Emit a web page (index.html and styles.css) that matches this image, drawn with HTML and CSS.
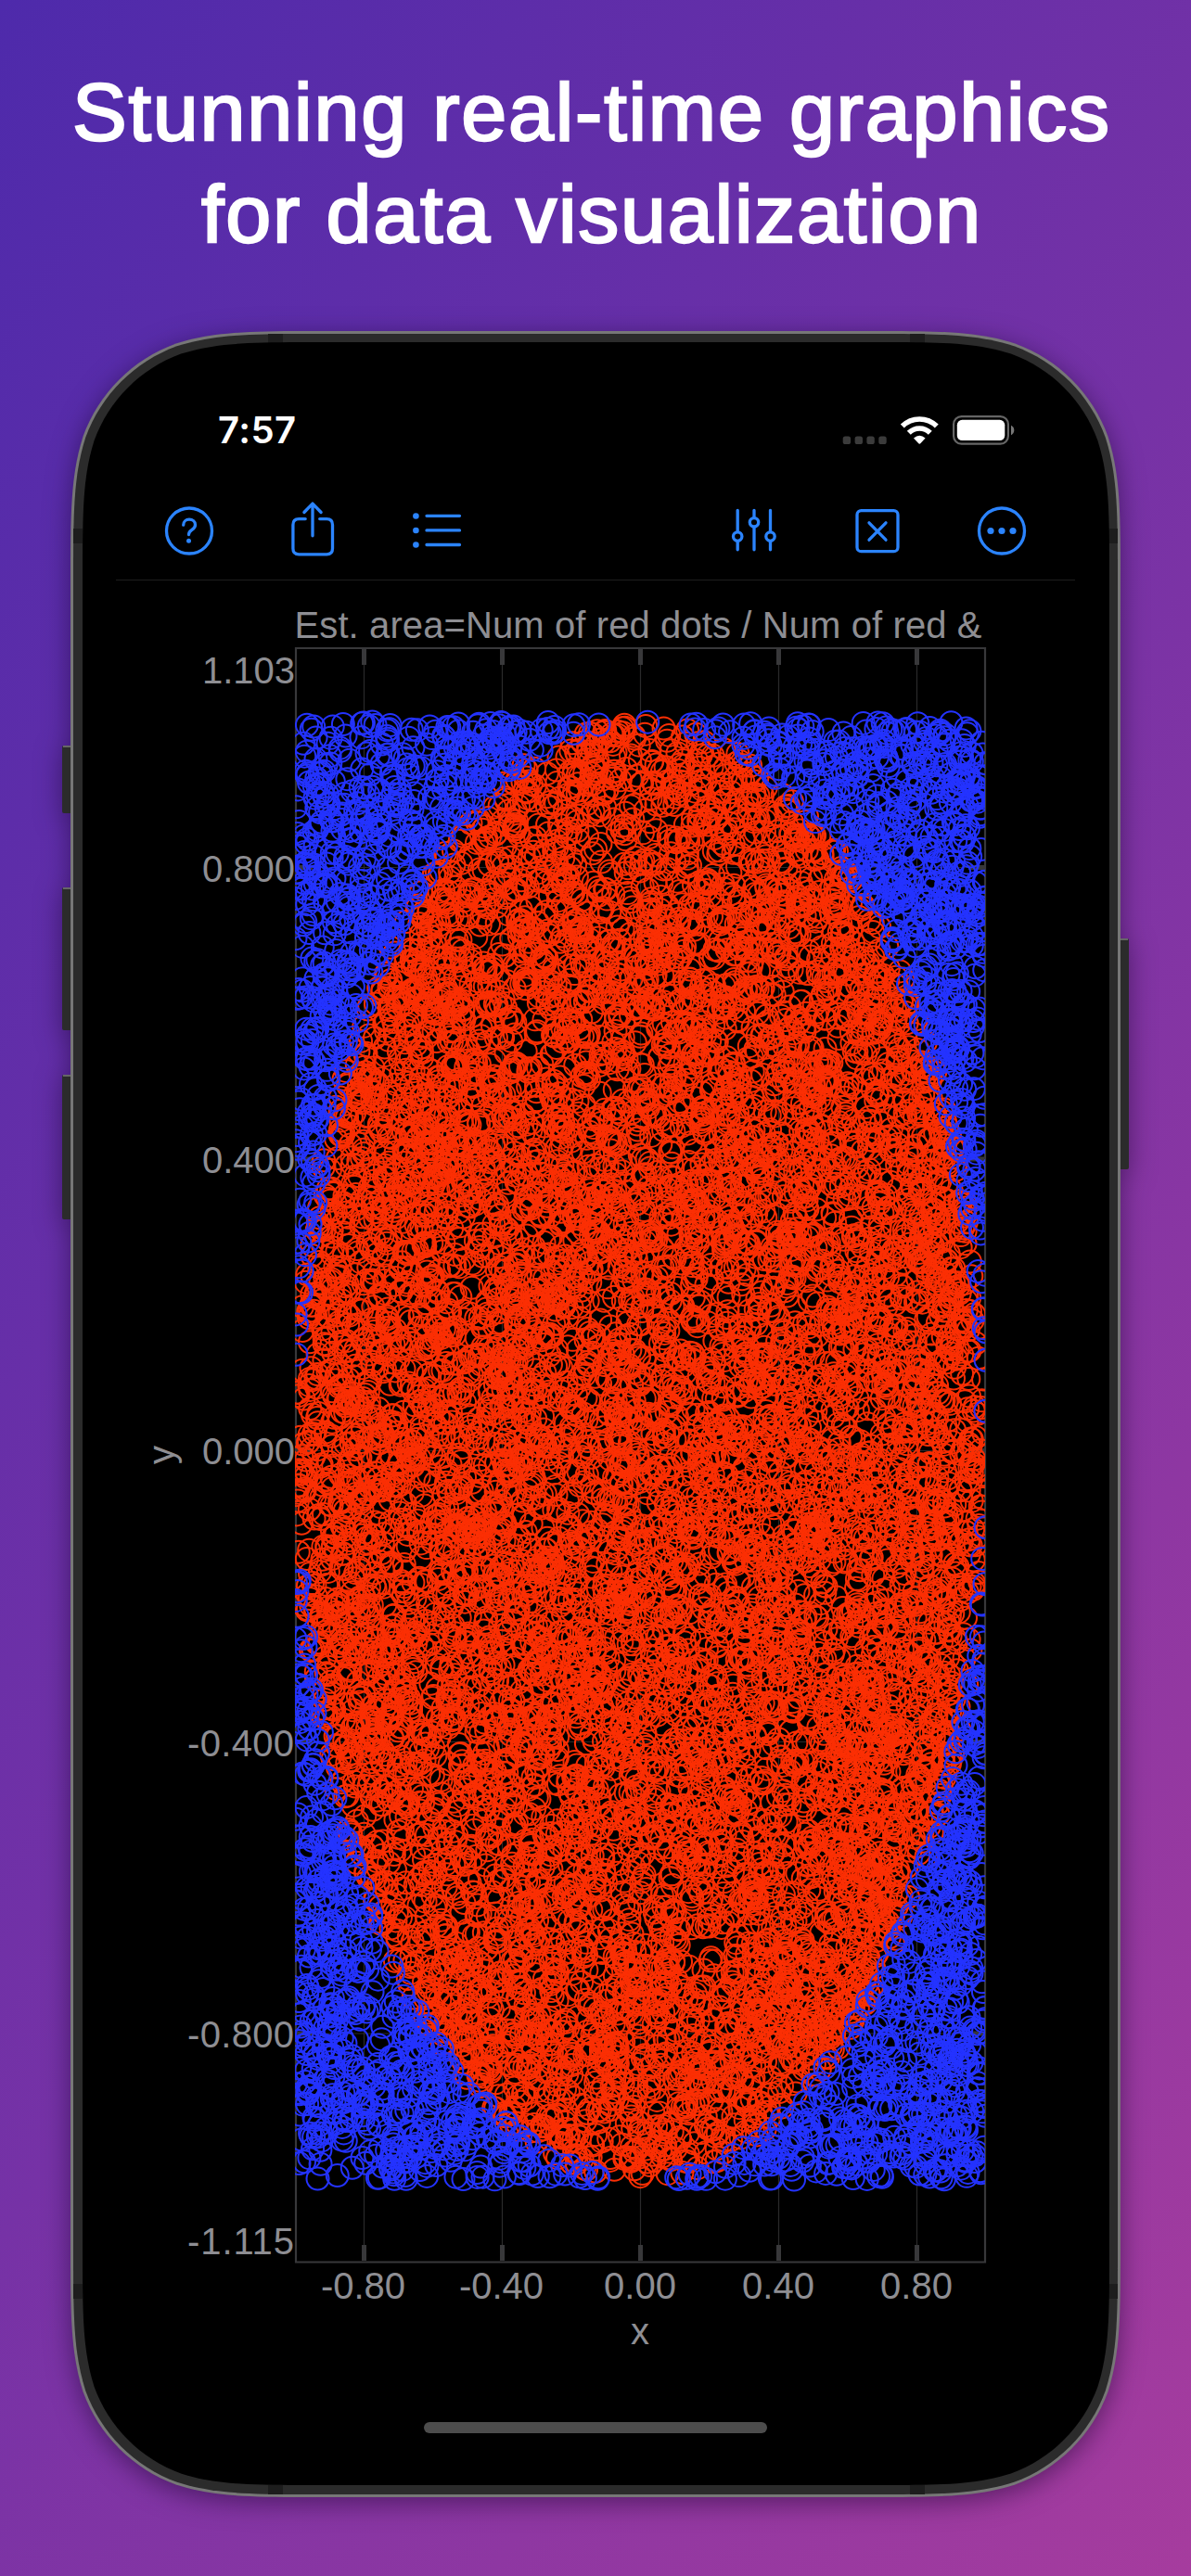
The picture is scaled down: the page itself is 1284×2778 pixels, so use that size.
FILE: index.html
```html
<!DOCTYPE html>
<html lang="en">
<head>
<meta charset="utf-8">
<title>Stunning real-time graphics</title>
<link rel="stylesheet" href="styles.css">
</head>
<body>
<main class="poster">
  <h1 class="headline">Stunning real-time graphics<br>for data visualization</h1>
  <section class="phone">
    <svg class="frame" viewBox="0 0 1150 2336" aria-hidden="true">
      <g class="keys">
        <rect x="0" y="447" width="14" height="73" rx="2"/><rect x="0" y="600" width="14" height="154" rx="2"/>
        <rect x="0" y="802" width="14" height="156" rx="2"/><rect x="1136" y="655" width="14" height="249" rx="2"/>
      </g>
      <path class="key-light" d="M1 448H10M1 601H10M1 803H10M1140 656H1149"/>
      <path id="rim" class="rim"/>
      <path id="band" class="band"/>
      <path class="antenna" d="M222 3h16v10h-16zM914 3h16v10h-16zM222 2323h16v10h-16zM914 2323h16v10h-16zM12 213h10v16h-10zM1128 213h10v16h-10zM12 2106h10v16h-10zM1128 2106h10v16h-10z"/>
      <path id="glass" class="glass"/>
    </svg>
    <div class="screen">
      <header class="status">
        <span class="time">7:57</span>
        <svg class="status-icons" width="188" height="36" viewBox="907 446 188 36">
          <g fill="#3b3b3b"><rect x="908.7" y="470.5" width="8.4" height="8.6" rx="2.6"/><rect x="921.6" y="470.5" width="8.4" height="8.6" rx="2.6"/><rect x="934.4" y="470.5" width="8.4" height="8.6" rx="2.6"/><rect x="947.3" y="470.5" width="8.4" height="8.6" rx="2.6"/></g>
          <g fill="none" stroke="#fff" stroke-width="5.6"><path d="M972.8 459.6a26.3 26.3 0 0 1 37 0"/><path d="M979.8 466.8a16.3 16.3 0 0 1 23 0"/></g>
          <path fill="#fff" d="M985 472.6q6.300-5.600 12.600 0l-5.100 5.500q-1.200 1.200-2.400 0z"/>
          <rect x="1028.100" y="449.100" width="58.800" height="29.600" rx="8.500" fill="none" stroke="#666" stroke-width="2.200"/>
          <rect x="1031.800" y="452.800" width="51.500" height="22.200" rx="5.500" fill="#fff"/>
          <path d="M1090 458.800q3.300 1.600 3.300 5.200t-3.300 5.200z" fill="#777"/>
        </svg>
      </header>
      <nav class="toolbar">
        <svg width="60" height="64" viewBox="174 540 60 64"><circle cx="204" cy="572.500" r="24.500"/><path d="M197.700 566.200c0-3.600 2.700-6 6.300-6s6.500 2.400 6.500 5.700c0 3-1.700 4.300-3.900 5.700-2.100 1.400-3.100 2.400-3.100 4.900"/><circle class="dot" cx="203.500" cy="583.200" r="2.500"/></svg>
        <svg width="60" height="64" viewBox="307.800 540 60 64"><path d="M329 559.600h-7q-6.300 0-6.300 6.300v25.600q0 6.300 6.300 6.300h30q6.300 0 6.300-6.300v-25.600q0-6.300-6.300-6.300h-7.500M336.800 577.800v-34M327.700 552.500l9.100-9.400 9.100 9.400"/></svg>
        <svg width="60" height="64" viewBox="442 540 60 64"><path d="M460 556.300h35.500M460 571.900h35.500M460 587.500h35.500"/><g class="dot"><circle cx="448.400" cy="556.500" r="3.300"/><circle cx="448.400" cy="572" r="3.300"/><circle cx="448.400" cy="587.500" r="3.300"/></g></svg>
        <svg class="right" width="60" height="64" viewBox="782 540 60 64"><path d="M795.200 550.300v23M795.200 584v8.800M813 550.300v7.700M813 568.500v24.300M830.500 550.300v23M830.500 584v8.800"/><circle cx="795.200" cy="578.600" r="4.700"/><circle cx="813" cy="563.300" r="4.700"/><circle cx="830.500" cy="578.600" r="4.700"/></svg>
        <svg width="60" height="64" viewBox="916 540 60 64"><rect x="924" y="550.700" width="44" height="44" rx="4.500"/><path d="M937 563.800l18 18.400M955 563.800l-18 18.400"/></svg>
        <svg width="60" height="64" viewBox="1050 540 60 64"><circle cx="1080" cy="572.500" r="24.500"/><g class="dot"><circle cx="1068" cy="572.500" r="3.600"/><circle cx="1080" cy="572.500" r="3.600"/><circle cx="1092" cy="572.500" r="3.600"/></g></svg>
      </nav>
      <figure class="chart">
        <svg class="axes" width="920" height="1920" viewBox="160 640 920 1920">
          <path class="grid" d="M392.500 700V2438M541.500 700V2438M690.500 700V2438M839.500 700V2438M988.500 700V2438M320 935.500H1061M320 1250H1061M320 1564.500H1061M320 1878.500H1061M320 2193H1061"/>
          <path class="tick" d="M392.500 700v17M541.500 700v17M690.500 700v17M839.500 700v17M988.500 700v17M392.500 2421v17M541.500 2421v17M690.500 2421v17M839.500 2421v17M988.500 2421v17M320 935.500h17M320 1250h17M320 1564.500h17M320 1878.500h17M320 2193h17M1044 935.500h17M1044 1250h17M1044 1564.500h17M1044 1878.500h17M1044 2193h17"/>
          <path class="box" d="M319 699H1062V2439.500H319z"/>
          <text x="317.500" y="688" textLength="741">Est. area=Num of red dots / Num of red &amp;</text>
          <g text-anchor="end">
            <text x="318" y="737">1.103</text><text x="318" y="951">0.800</text><text x="318" y="1265">0.400</text><text x="318" y="1579">0.000</text>
            <text x="317" y="1894" textLength="115">-0.400</text><text x="317" y="2208" textLength="115">-0.800</text><text x="317" y="2431" textLength="115">-1.115</text>
          </g>
          <g text-anchor="middle">
            <text x="391.500" y="2479">-0.80</text><text x="540.500" y="2479">-0.40</text><text x="690" y="2479">0.00</text><text x="839" y="2479">0.40</text><text x="988" y="2479">0.80</text>
            <text x="690" y="2528">x</text>
            <text transform="translate(188 1569) rotate(-90)">y</text>
          </g>
        </svg>
        <canvas class="dots" id="dots" width="744" height="1743"></canvas>
      </figure>
      <div class="home"></div>
    </div>
  </section>
</main>
<script src="plot.js"></script>
</body>
</html>
```
FILE: styles.css
```css
body {
  margin: 0;
  background: #7b34a6;
}
.poster {
  width: 1284px;
  height: 2778px;
  overflow: hidden;
  display: flex;
  flex-direction: column;
  align-items: center;
  background: linear-gradient(122deg, #4e2aab 0%, #7632a6 50%, #a63c9e 100%);
}
.headline {
  box-sizing: border-box;
  width: 100%;
  height: 357px;
  margin: 0;
  padding: 66px 8px 0 0;
  color: #fff;
  font: 400 88px/110px "Liberation Sans", Arial, sans-serif;
  letter-spacing: 1.8px;
  text-align: center;
  white-space: nowrap;
  -webkit-text-stroke: 2.4px #fff;
}
.phone {
  position: relative;
  width: 1150px;
  height: 2336px;
}
.frame {
  position: absolute;
  inset: 0;
  width: 1150px;
  height: 2336px;
  overflow: visible;
  filter: drop-shadow(0 6px 14px rgba(20, 0, 40, .5));
}
.keys, .band { fill: #2b2b2b; }
.key-light { stroke: #666; stroke-width: 2; }
.rim { fill: #777; }
.antenna { fill: #1d1d1d; }
.glass { fill: #000; }
.screen {
  position: relative;
  display: flex;
  flex-direction: column;
  height: 100%;
}
.status {
  display: flex;
  justify-content: space-between;
  align-items: flex-start;
  padding: 89px 122px 0 168px;
  height: 94px;
}
.time {
  color: #fff;
  font: 600 40px/36px Inter, sans-serif;
  letter-spacing: .5px;
}
.toolbar {
  box-sizing: border-box;
  display: flex;
  gap: 74px;
  width: 1034px;
  height: 86px;
  margin: 0 58px;
  padding: 0 49px;
  border-bottom: 1px solid #1e1e1e;
}
.toolbar svg {
  flex: none;
  fill: none;
  stroke: #2b84ff;
  stroke-width: 3.300;
  stroke-linecap: round;
  stroke-linejoin: round;
}
.toolbar .right { margin-left: auto; }
.toolbar .dot { fill: #2b84ff; stroke: none; }
.chart {
  position: relative;
  width: 920px;
  height: 1920px;
  margin: 14px 0 0 93px;
}
.axes { display: block; }
.axes text {
  fill: #8e8e93;
  font: 40px "Liberation Sans", Arial, sans-serif;
}
.grid { fill: none; stroke: #2a2a2b; stroke-width: 1.200; }
.tick { fill: none; stroke: #38383a; stroke-width: 5; }
.box { fill: none; stroke: #38383a; stroke-width: 2.200; }
.dots {
  position: absolute;
  left: 158px;
  top: 58px;
}
.home {
  width: 370px;
  height: 12px;
  margin: 52px auto 0;
  border-radius: 6px;
  background: #4c4c4c;
}
```
FILE: plot.js
```js
// Outline with continuous-curvature corners, used for the phone body.
function outline(x, y, w, h, r) {
  var a = 1.5287 * r, b = 1.0885 * r, c = 0.8684 * r, d = 0.6315 * r;
  var e = 0.0749 * r, f = 0.3728 * r, g = 0.1691 * r;
  var R = x + w, B = y + h;
  return [
    "M", x + a, y, "H", R - a,
    "C", R - b, y, R - c, y, R - d, y + e,
    "C", R - f, y + g, R - g, y + f, R - e, y + d,
    "C", R, y + c, R, y + b, R, y + a, "V", B - a,
    "C", R, B - b, R, B - c, R - e, B - d,
    "C", R - g, B - f, R - f, B - g, R - d, B - e,
    "C", R - c, B, R - b, B, R - a, B, "H", x + a,
    "C", x + b, B, x + c, B, x + d, B - e,
    "C", x + f, B - g, x + g, B - f, x + e, B - d,
    "C", x, B - c, x, B - b, x, B - a, "V", y + a,
    "C", x, y + b, x, y + c, x + e, y + d,
    "C", x + g, y + f, x + f, y + g, x + d, y + e,
    "C", x + c, y, x + b, y, x + a, y, "Z"
  ].join(" ");
}
document.getElementById("rim").setAttribute("d", outline(9, 0, 1132, 2336, 180));
document.getElementById("band").setAttribute("d", outline(12, 3, 1126, 2330, 177));
document.getElementById("glass").setAttribute("d", outline(22, 12, 1107, 2311, 168));

// Monte Carlo samples: red inside the unit circle, blue outside.
var ctx = document.getElementById("dots").getContext("2d");
var seed = 314;
function random() {
  seed = (seed + 0x6D2B79F5) | 0;
  var t = Math.imul(seed ^ (seed >>> 15), 1 | seed);
  t = (t + Math.imul(t ^ (t >>> 7), 61 | t)) ^ t;
  return ((t ^ (t >>> 14)) >>> 0) / 4294967296;
}
var inside = [], outside = [];
for (var i = 0; i < 12000; i++) {
  var u = random() * 2 - 1, v = random() * 2 - 1;
  (u * u + v * v <= 1 ? inside : outside).push([372.3 + u * 372.3, 866.5 + v * 786]);
}
function plot(points, color) {
  ctx.strokeStyle = color;
  ctx.lineWidth = 2;
  points.forEach(function (p) {
    ctx.beginPath();
    ctx.arc(p[0], p[1], 12, 0, Math.PI * 2);
    ctx.stroke();
  });
}
plot(inside, "#fb2f04");
plot(outside, "#2433ff");
```
